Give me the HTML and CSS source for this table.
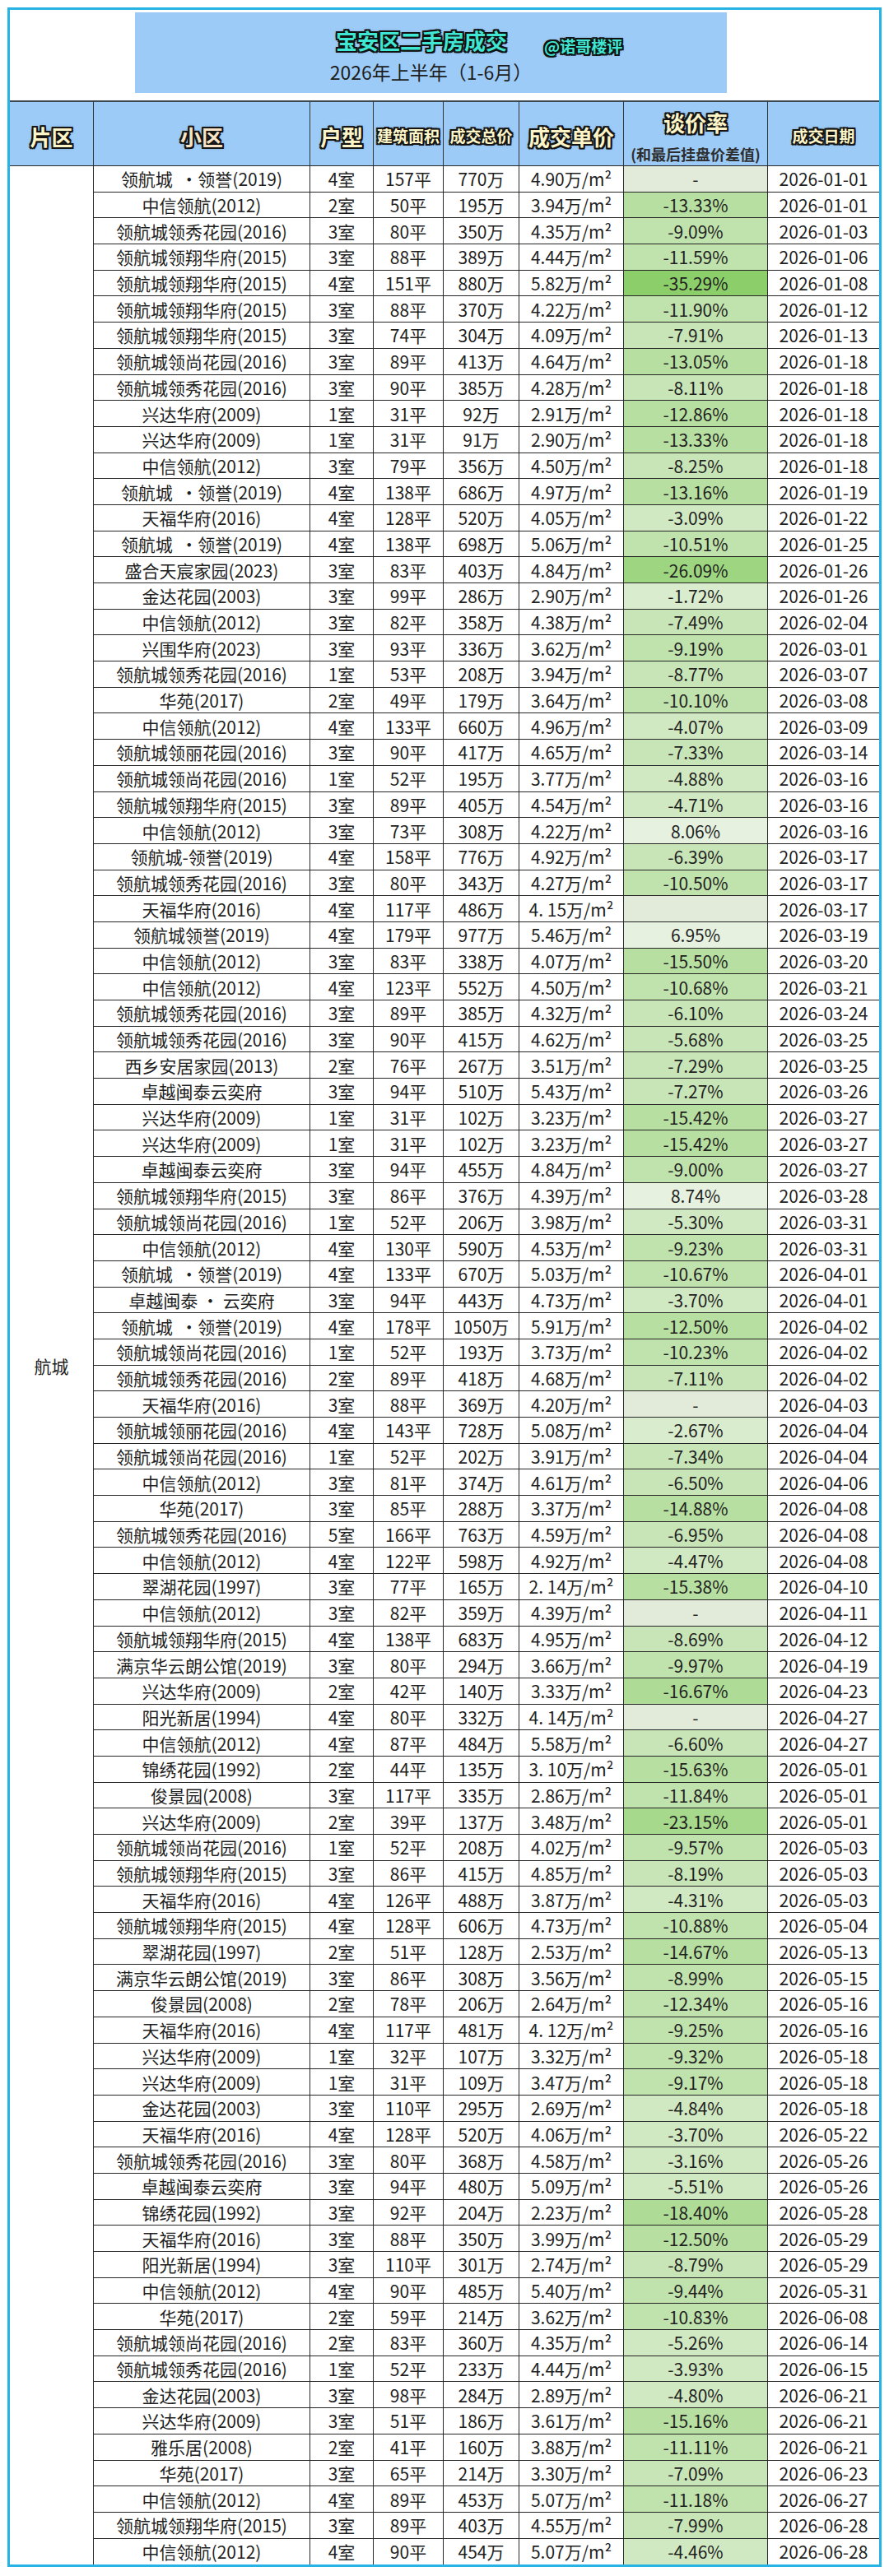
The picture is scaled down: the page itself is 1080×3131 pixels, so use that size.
FILE: index.html
```html
<!DOCTYPE html>
<html lang="zh-CN">
<head>
<meta charset="utf-8">
<title>宝安区二手房成交 2026年上半年</title>
<link rel="stylesheet" href="styles.css">
</head>
<body>
<div class="frame">
  <div class="title-area">
    <div class="title-box">
      <div class="title-row">
        <span class="title ol-teal">宝安区二手房成交</span>
        <span class="handle ol-teal">@诺哥楼评</span>
      </div>
      <div class="subtitle">2026年上半年（1-6月）</div>
    </div>
  </div>
  <table class="deals">
    <colgroup>
      <col class="c-area"><col class="c-name"><col class="c-type"><col class="c-size"><col class="c-total"><col class="c-unit"><col class="c-rate"><col class="c-date">
    </colgroup>
    <thead>
      <tr class="hrow">
        <th><span class="ol ol-lg">片区</span></th>
        <th><span class="ol ol-lg ol-peach">小区</span></th>
        <th><span class="ol ol-lg">户型</span></th>
        <th><span class="ol ol-sm">建筑面积</span></th>
        <th><span class="ol ol-sm">成交总价</span></th>
        <th><span class="ol ol-lg">成交单价</span></th>
        <th class="h-rate"><div class="ol ol-lg">谈价率</div><div class="h-note">(和最后挂盘价差值)</div></th>
        <th><span class="ol ol-sm">成交日期</span></th>
      </tr>
    </thead>
    <tbody>
<tr><td class="area" rowspan="92">航城</td><td>领航城  ·领誉(2019)</td><td>4室</td><td>157平</td><td>770万</td><td>4.90万/m²</td><td class="rate na">-</td><td>2026-01-01</td></tr>
<tr><td>中信领航(2012)</td><td>2室</td><td>50平</td><td>195万</td><td>3.94万/m²</td><td class="rate g5">-13.33%</td><td>2026-01-01</td></tr>
<tr><td>领航城领秀花园(2016)</td><td>3室</td><td>80平</td><td>350万</td><td>4.35万/m²</td><td class="rate g4">-9.09%</td><td>2026-01-03</td></tr>
<tr><td>领航城领翔华府(2015)</td><td>3室</td><td>88平</td><td>389万</td><td>4.44万/m²</td><td class="rate g4">-11.59%</td><td>2026-01-06</td></tr>
<tr><td>领航城领翔华府(2015)</td><td>4室</td><td>151平</td><td>880万</td><td>5.82万/m²</td><td class="rate g10">-35.29%</td><td>2026-01-08</td></tr>
<tr><td>领航城领翔华府(2015)</td><td>3室</td><td>88平</td><td>370万</td><td>4.22万/m²</td><td class="rate g4">-11.90%</td><td>2026-01-12</td></tr>
<tr><td>领航城领翔华府(2015)</td><td>3室</td><td>74平</td><td>304万</td><td>4.09万/m²</td><td class="rate g3">-7.91%</td><td>2026-01-13</td></tr>
<tr><td>领航城领尚花园(2016)</td><td>3室</td><td>89平</td><td>413万</td><td>4.64万/m²</td><td class="rate g5">-13.05%</td><td>2026-01-18</td></tr>
<tr><td>领航城领秀花园(2016)</td><td>3室</td><td>90平</td><td>385万</td><td>4.28万/m²</td><td class="rate g3">-8.11%</td><td>2026-01-18</td></tr>
<tr><td>兴达华府(2009)</td><td>1室</td><td>31平</td><td>92万</td><td>2.91万/m²</td><td class="rate g5">-12.86%</td><td>2026-01-18</td></tr>
<tr><td>兴达华府(2009)</td><td>1室</td><td>31平</td><td>91万</td><td>2.90万/m²</td><td class="rate g5">-13.33%</td><td>2026-01-18</td></tr>
<tr><td>中信领航(2012)</td><td>3室</td><td>79平</td><td>356万</td><td>4.50万/m²</td><td class="rate g3">-8.25%</td><td>2026-01-18</td></tr>
<tr><td>领航城  ·领誉(2019)</td><td>4室</td><td>138平</td><td>686万</td><td>4.97万/m²</td><td class="rate g5">-13.16%</td><td>2026-01-19</td></tr>
<tr><td>天福华府(2016)</td><td>4室</td><td>128平</td><td>520万</td><td>4.05万/m²</td><td class="rate g2">-3.09%</td><td>2026-01-22</td></tr>
<tr><td>领航城  ·领誉(2019)</td><td>4室</td><td>138平</td><td>698万</td><td>5.06万/m²</td><td class="rate g4">-10.51%</td><td>2026-01-25</td></tr>
<tr><td>盛合天宸家园(2023)</td><td>3室</td><td>83平</td><td>403万</td><td>4.84万/m²</td><td class="rate g8">-26.09%</td><td>2026-01-26</td></tr>
<tr><td>金达花园(2003)</td><td>3室</td><td>99平</td><td>286万</td><td>2.90万/m²</td><td class="rate g1">-1.72%</td><td>2026-01-26</td></tr>
<tr><td>中信领航(2012)</td><td>3室</td><td>82平</td><td>358万</td><td>4.38万/m²</td><td class="rate g3">-7.49%</td><td>2026-02-04</td></tr>
<tr><td>兴围华府(2023)</td><td>3室</td><td>93平</td><td>336万</td><td>3.62万/m²</td><td class="rate g4">-9.19%</td><td>2026-03-01</td></tr>
<tr><td>领航城领秀花园(2016)</td><td>1室</td><td>53平</td><td>208万</td><td>3.94万/m²</td><td class="rate g3">-8.77%</td><td>2026-03-07</td></tr>
<tr><td>华苑(2017)</td><td>2室</td><td>49平</td><td>179万</td><td>3.64万/m²</td><td class="rate g4">-10.10%</td><td>2026-03-08</td></tr>
<tr><td>中信领航(2012)</td><td>4室</td><td>133平</td><td>660万</td><td>4.96万/m²</td><td class="rate g2">-4.07%</td><td>2026-03-09</td></tr>
<tr><td>领航城领丽花园(2016)</td><td>3室</td><td>90平</td><td>417万</td><td>4.65万/m²</td><td class="rate g3">-7.33%</td><td>2026-03-14</td></tr>
<tr><td>领航城领尚花园(2016)</td><td>1室</td><td>52平</td><td>195万</td><td>3.77万/m²</td><td class="rate g2">-4.88%</td><td>2026-03-16</td></tr>
<tr><td>领航城领翔华府(2015)</td><td>3室</td><td>89平</td><td>405万</td><td>4.54万/m²</td><td class="rate g2">-4.71%</td><td>2026-03-16</td></tr>
<tr><td>中信领航(2012)</td><td>3室</td><td>73平</td><td>308万</td><td>4.22万/m²</td><td class="rate pos">8.06%</td><td>2026-03-16</td></tr>
<tr><td>领航城-领誉(2019)</td><td>4室</td><td>158平</td><td>776万</td><td>4.92万/m²</td><td class="rate g3">-6.39%</td><td>2026-03-17</td></tr>
<tr><td>领航城领秀花园(2016)</td><td>3室</td><td>80平</td><td>343万</td><td>4.27万/m²</td><td class="rate g4">-10.50%</td><td>2026-03-17</td></tr>
<tr><td>天福华府(2016)</td><td>4室</td><td>117平</td><td>486万</td><td>4. 15万/m²</td><td class="rate na"></td><td>2026-03-17</td></tr>
<tr><td>领航城领誉(2019)</td><td>4室</td><td>179平</td><td>977万</td><td>5.46万/m²</td><td class="rate pos">6.95%</td><td>2026-03-19</td></tr>
<tr><td>中信领航(2012)</td><td>3室</td><td>83平</td><td>338万</td><td>4.07万/m²</td><td class="rate g5">-15.50%</td><td>2026-03-20</td></tr>
<tr><td>中信领航(2012)</td><td>4室</td><td>123平</td><td>552万</td><td>4.50万/m²</td><td class="rate g4">-10.68%</td><td>2026-03-21</td></tr>
<tr><td>领航城领秀花园(2016)</td><td>3室</td><td>89平</td><td>385万</td><td>4.32万/m²</td><td class="rate g3">-6.10%</td><td>2026-03-24</td></tr>
<tr><td>领航城领秀花园(2016)</td><td>3室</td><td>90平</td><td>415万</td><td>4.62万/m²</td><td class="rate g3">-5.68%</td><td>2026-03-25</td></tr>
<tr><td>西乡安居家园(2013)</td><td>2室</td><td>76平</td><td>267万</td><td>3.51万/m²</td><td class="rate g3">-7.29%</td><td>2026-03-25</td></tr>
<tr><td>卓越闽泰云奕府</td><td>3室</td><td>94平</td><td>510万</td><td>5.43万/m²</td><td class="rate g3">-7.27%</td><td>2026-03-26</td></tr>
<tr><td>兴达华府(2009)</td><td>1室</td><td>31平</td><td>102万</td><td>3.23万/m²</td><td class="rate g5">-15.42%</td><td>2026-03-27</td></tr>
<tr><td>兴达华府(2009)</td><td>1室</td><td>31平</td><td>102万</td><td>3.23万/m²</td><td class="rate g5">-15.42%</td><td>2026-03-27</td></tr>
<tr><td>卓越闽泰云奕府</td><td>3室</td><td>94平</td><td>455万</td><td>4.84万/m²</td><td class="rate g4">-9.00%</td><td>2026-03-27</td></tr>
<tr><td>领航城领翔华府(2015)</td><td>3室</td><td>86平</td><td>376万</td><td>4.39万/m²</td><td class="rate pos">8.74%</td><td>2026-03-28</td></tr>
<tr><td>领航城领尚花园(2016)</td><td>1室</td><td>52平</td><td>206万</td><td>3.98万/m²</td><td class="rate g2">-5.30%</td><td>2026-03-31</td></tr>
<tr><td>中信领航(2012)</td><td>4室</td><td>130平</td><td>590万</td><td>4.53万/m²</td><td class="rate g4">-9.23%</td><td>2026-03-31</td></tr>
<tr><td>领航城  ·领誉(2019)</td><td>4室</td><td>133平</td><td>670万</td><td>5.03万/m²</td><td class="rate g4">-10.67%</td><td>2026-04-01</td></tr>
<tr><td>卓越闽泰 · 云奕府</td><td>3室</td><td>94平</td><td>443万</td><td>4.73万/m²</td><td class="rate g2">-3.70%</td><td>2026-04-01</td></tr>
<tr><td>领航城  ·领誉(2019)</td><td>4室</td><td>178平</td><td>1050万</td><td>5.91万/m²</td><td class="rate g5">-12.50%</td><td>2026-04-02</td></tr>
<tr><td>领航城领尚花园(2016)</td><td>1室</td><td>52平</td><td>193万</td><td>3.73万/m²</td><td class="rate g4">-10.23%</td><td>2026-04-02</td></tr>
<tr><td>领航城领秀花园(2016)</td><td>2室</td><td>89平</td><td>418万</td><td>4.68万/m²</td><td class="rate g3">-7.11%</td><td>2026-04-02</td></tr>
<tr><td>天福华府(2016)</td><td>3室</td><td>88平</td><td>369万</td><td>4.20万/m²</td><td class="rate na">-</td><td>2026-04-03</td></tr>
<tr><td>领航城领丽花园(2016)</td><td>4室</td><td>143平</td><td>728万</td><td>5.08万/m²</td><td class="rate g1">-2.67%</td><td>2026-04-04</td></tr>
<tr><td>领航城领尚花园(2016)</td><td>1室</td><td>52平</td><td>202万</td><td>3.91万/m²</td><td class="rate g3">-7.34%</td><td>2026-04-04</td></tr>
<tr><td>中信领航(2012)</td><td>3室</td><td>81平</td><td>374万</td><td>4.61万/m²</td><td class="rate g3">-6.50%</td><td>2026-04-06</td></tr>
<tr><td>华苑(2017)</td><td>3室</td><td>85平</td><td>288万</td><td>3.37万/m²</td><td class="rate g5">-14.88%</td><td>2026-04-08</td></tr>
<tr><td>领航城领秀花园(2016)</td><td>5室</td><td>166平</td><td>763万</td><td>4.59万/m²</td><td class="rate g3">-6.95%</td><td>2026-04-08</td></tr>
<tr><td>中信领航(2012)</td><td>4室</td><td>122平</td><td>598万</td><td>4.92万/m²</td><td class="rate g2">-4.47%</td><td>2026-04-08</td></tr>
<tr><td>翠湖花园(1997)</td><td>3室</td><td>77平</td><td>165万</td><td>2. 14万/m²</td><td class="rate g5">-15.38%</td><td>2026-04-10</td></tr>
<tr><td>中信领航(2012)</td><td>3室</td><td>82平</td><td>359万</td><td>4.39万/m²</td><td class="rate na">-</td><td>2026-04-11</td></tr>
<tr><td>领航城领翔华府(2015)</td><td>4室</td><td>138平</td><td>683万</td><td>4.95万/m²</td><td class="rate g3">-8.69%</td><td>2026-04-12</td></tr>
<tr><td>满京华云朗公馆(2019)</td><td>3室</td><td>80平</td><td>294万</td><td>3.66万/m²</td><td class="rate g4">-9.97%</td><td>2026-04-19</td></tr>
<tr><td>兴达华府(2009)</td><td>2室</td><td>42平</td><td>140万</td><td>3.33万/m²</td><td class="rate g6">-16.67%</td><td>2026-04-23</td></tr>
<tr><td>阳光新居(1994)</td><td>4室</td><td>80平</td><td>332万</td><td>4. 14万/m²</td><td class="rate na">-</td><td>2026-04-27</td></tr>
<tr><td>中信领航(2012)</td><td>4室</td><td>87平</td><td>484万</td><td>5.58万/m²</td><td class="rate g3">-6.60%</td><td>2026-04-27</td></tr>
<tr><td>锦绣花园(1992)</td><td>2室</td><td>44平</td><td>135万</td><td>3. 10万/m²</td><td class="rate g5">-15.63%</td><td>2026-05-01</td></tr>
<tr><td>俊景园(2008)</td><td>3室</td><td>117平</td><td>335万</td><td>2.86万/m²</td><td class="rate g4">-11.84%</td><td>2026-05-01</td></tr>
<tr><td>兴达华府(2009)</td><td>2室</td><td>39平</td><td>137万</td><td>3.48万/m²</td><td class="rate g7">-23.15%</td><td>2026-05-01</td></tr>
<tr><td>领航城领尚花园(2016)</td><td>1室</td><td>52平</td><td>208万</td><td>4.02万/m²</td><td class="rate g4">-9.57%</td><td>2026-05-03</td></tr>
<tr><td>领航城领翔华府(2015)</td><td>3室</td><td>86平</td><td>415万</td><td>4.85万/m²</td><td class="rate g3">-8.19%</td><td>2026-05-03</td></tr>
<tr><td>天福华府(2016)</td><td>4室</td><td>126平</td><td>488万</td><td>3.87万/m²</td><td class="rate g2">-4.31%</td><td>2026-05-03</td></tr>
<tr><td>领航城领翔华府(2015)</td><td>4室</td><td>128平</td><td>606万</td><td>4.73万/m²</td><td class="rate g4">-10.88%</td><td>2026-05-04</td></tr>
<tr><td>翠湖花园(1997)</td><td>2室</td><td>51平</td><td>128万</td><td>2.53万/m²</td><td class="rate g5">-14.67%</td><td>2026-05-13</td></tr>
<tr><td>满京华云朗公馆(2019)</td><td>3室</td><td>86平</td><td>308万</td><td>3.56万/m²</td><td class="rate g4">-8.99%</td><td>2026-05-15</td></tr>
<tr><td>俊景园(2008)</td><td>2室</td><td>78平</td><td>206万</td><td>2.64万/m²</td><td class="rate g4">-12.34%</td><td>2026-05-16</td></tr>
<tr><td>天福华府(2016)</td><td>4室</td><td>117平</td><td>481万</td><td>4. 12万/m²</td><td class="rate g4">-9.25%</td><td>2026-05-16</td></tr>
<tr><td>兴达华府(2009)</td><td>1室</td><td>32平</td><td>107万</td><td>3.32万/m²</td><td class="rate g4">-9.32%</td><td>2026-05-18</td></tr>
<tr><td>兴达华府(2009)</td><td>1室</td><td>31平</td><td>109万</td><td>3.47万/m²</td><td class="rate g4">-9.17%</td><td>2026-05-18</td></tr>
<tr><td>金达花园(2003)</td><td>3室</td><td>110平</td><td>295万</td><td>2.69万/m²</td><td class="rate g2">-4.84%</td><td>2026-05-18</td></tr>
<tr><td>天福华府(2016)</td><td>4室</td><td>128平</td><td>520万</td><td>4.06万/m²</td><td class="rate g2">-3.70%</td><td>2026-05-22</td></tr>
<tr><td>领航城领秀花园(2016)</td><td>3室</td><td>80平</td><td>368万</td><td>4.58万/m²</td><td class="rate g2">-3.16%</td><td>2026-05-26</td></tr>
<tr><td>卓越闽泰云奕府</td><td>3室</td><td>94平</td><td>480万</td><td>5.09万/m²</td><td class="rate g2">-5.51%</td><td>2026-05-26</td></tr>
<tr><td>锦绣花园(1992)</td><td>3室</td><td>92平</td><td>204万</td><td>2.23万/m²</td><td class="rate g6">-18.40%</td><td>2026-05-28</td></tr>
<tr><td>天福华府(2016)</td><td>3室</td><td>88平</td><td>350万</td><td>3.99万/m²</td><td class="rate g5">-12.50%</td><td>2026-05-29</td></tr>
<tr><td>阳光新居(1994)</td><td>3室</td><td>110平</td><td>301万</td><td>2.74万/m²</td><td class="rate g3">-8.79%</td><td>2026-05-29</td></tr>
<tr><td>中信领航(2012)</td><td>4室</td><td>90平</td><td>485万</td><td>5.40万/m²</td><td class="rate g4">-9.44%</td><td>2026-05-31</td></tr>
<tr><td>华苑(2017)</td><td>2室</td><td>59平</td><td>214万</td><td>3.62万/m²</td><td class="rate g4">-10.83%</td><td>2026-06-08</td></tr>
<tr><td>领航城领尚花园(2016)</td><td>2室</td><td>83平</td><td>360万</td><td>4.35万/m²</td><td class="rate g2">-5.26%</td><td>2026-06-14</td></tr>
<tr><td>领航城领秀花园(2016)</td><td>1室</td><td>52平</td><td>233万</td><td>4.44万/m²</td><td class="rate g2">-3.93%</td><td>2026-06-15</td></tr>
<tr><td>金达花园(2003)</td><td>3室</td><td>98平</td><td>284万</td><td>2.89万/m²</td><td class="rate g2">-4.80%</td><td>2026-06-21</td></tr>
<tr><td>兴达华府(2009)</td><td>3室</td><td>51平</td><td>186万</td><td>3.61万/m²</td><td class="rate g5">-15.16%</td><td>2026-06-21</td></tr>
<tr><td>雅乐居(2008)</td><td>2室</td><td>41平</td><td>160万</td><td>3.88万/m²</td><td class="rate g4">-11.11%</td><td>2026-06-21</td></tr>
<tr><td>华苑(2017)</td><td>3室</td><td>65平</td><td>214万</td><td>3.30万/m²</td><td class="rate g3">-7.09%</td><td>2026-06-23</td></tr>
<tr><td>中信领航(2012)</td><td>4室</td><td>89平</td><td>453万</td><td>5.07万/m²</td><td class="rate g4">-11.18%</td><td>2026-06-27</td></tr>
<tr><td>领航城领翔华府(2015)</td><td>3室</td><td>89平</td><td>403万</td><td>4.55万/m²</td><td class="rate g3">-7.99%</td><td>2026-06-28</td></tr>
<tr><td>中信领航(2012)</td><td>4室</td><td>90平</td><td>454万</td><td>5.07万/m²</td><td class="rate g2">-4.46%</td><td>2026-06-28</td></tr>
    </tbody>
  </table>
</div>
</body>
</html>
```

FILE: styles.css
```css
* { box-sizing: border-box; }

body {
  margin: 0;
  background: #ffffff;
  font-family: "Noto Sans CJK SC", "Noto Sans", sans-serif;
  color: #222222;
}

.frame {
  margin: 9px 0 0 9px;
  width: 1062px;
  border: 3px solid #27b4e4;
  background: #ffffff;
}

/* ---------- title ---------- */
.title-area {
  height: 110px;
  padding: 3px 0 0 152px;
}

.title-box {
  width: 719px;
  height: 98px;
  background: #9ccbf8;
  padding-top: 18px;
}

.title-row {
  display: flex;
  align-items: center;
  gap: 45px;
  height: 32px;
  padding-left: 244px;
}

.ol-teal {
  color: #3fe6d2;
  font-weight: 700;
  text-shadow:
    -2px -2px 0 #111, 2px -2px 0 #111, -2px 2px 0 #111, 2px 2px 0 #111,
    0 -2px 0 #111, 0 2px 0 #111, -2px 0 0 #111, 2px 0 0 #111,
    0 0 4px rgba(0, 0, 0, 0.5);
}

.title {
  font-size: 26px;
  line-height: 32px;
  white-space: nowrap;
}

.handle {
  font-size: 19px;
  line-height: 24px;
  padding-top: 14px;
  white-space: nowrap;
}

.subtitle {
  margin-top: 6px;
  text-align: center;
  font-size: 23px;
  line-height: 32px;
  color: #1e1e1e;
}

/* ---------- table ---------- */
.deals {
  width: 1056px;
  table-layout: fixed;
  border-collapse: separate;
  border-spacing: 0;
}

.c-area { width: 101px; }
.c-name { width: 263px; }
.c-type { width: 77px; }
.c-size { width: 85px; }
.c-total { width: 92px; }
.c-unit { width: 127px; }
.c-rate { width: 175px; }
.c-date { width: 136px; }

.hrow { height: 80px; }

.hrow th {
  background: #9ccbf8;
  border-top: 2px solid #3d4852;
  border-bottom: 1px solid #262626;
  border-left: 1px solid #333333;
  padding: 6px 0 0;
  text-align: center;
  vertical-align: middle;
  white-space: nowrap;
  font-weight: 700;
}

.hrow th:first-child { border-left: none; }

.ol {
  color: #fdf5c8;
  font-weight: 700;
  text-shadow:
    -2px -2px 0 #141414, 2px -2px 0 #141414, -2px 2px 0 #141414, 2px 2px 0 #141414,
    0 -2px 0 #141414, 0 2px 0 #141414, -2px 0 0 #141414, 2px 0 0 #141414,
    0 0 4px rgba(0, 0, 0, 0.55);
}

.ol-lg { font-size: 26px; line-height: 32px; }
.ol-sm { font-size: 19px; line-height: 24px; }
.ol-peach { color: #f8e2c6; }

.hrow th.h-rate {
  vertical-align: top;
  padding-top: 9px;
}

.h-note {
  margin-top: 10px;
  font-size: 18px;
  line-height: 24px;
  font-weight: 700;
  color: #2e2e2e;
}

tbody tr { height: 31.7px; }

tbody td {
  padding: 0;
  border-left: 1px solid #2a2a2a;
  border-bottom: 1px solid #262626;
  text-align: center;
  vertical-align: middle;
  white-space: pre;
  font-size: 21px;
  line-height: 24px;
  color: #1f1f1f;
}

tbody tr:last-child td { border-bottom: none; }

tbody td.area {
  border-left: none;
  border-bottom: none;
  background: #ffffff;
}

/* 谈价率 colour scale */
.rate.na  { background: #e2ebda; }
.rate.pos { background: #e6f2df; }
.rate.g1  { background: #d9ecce; }
.rate.g2  { background: #d1e9c3; }
.rate.g3  { background: #c8e5b8; }
.rate.g4  { background: #c0e2ad; }
.rate.g5  { background: #b7dfa1; }
.rate.g6  { background: #aedc96; }
.rate.g7  { background: #a6d98b; }
.rate.g8  { background: #9dd580; }
.rate.g9  { background: #95d275; }
.rate.g10 { background: #8ccf6a; }
```
